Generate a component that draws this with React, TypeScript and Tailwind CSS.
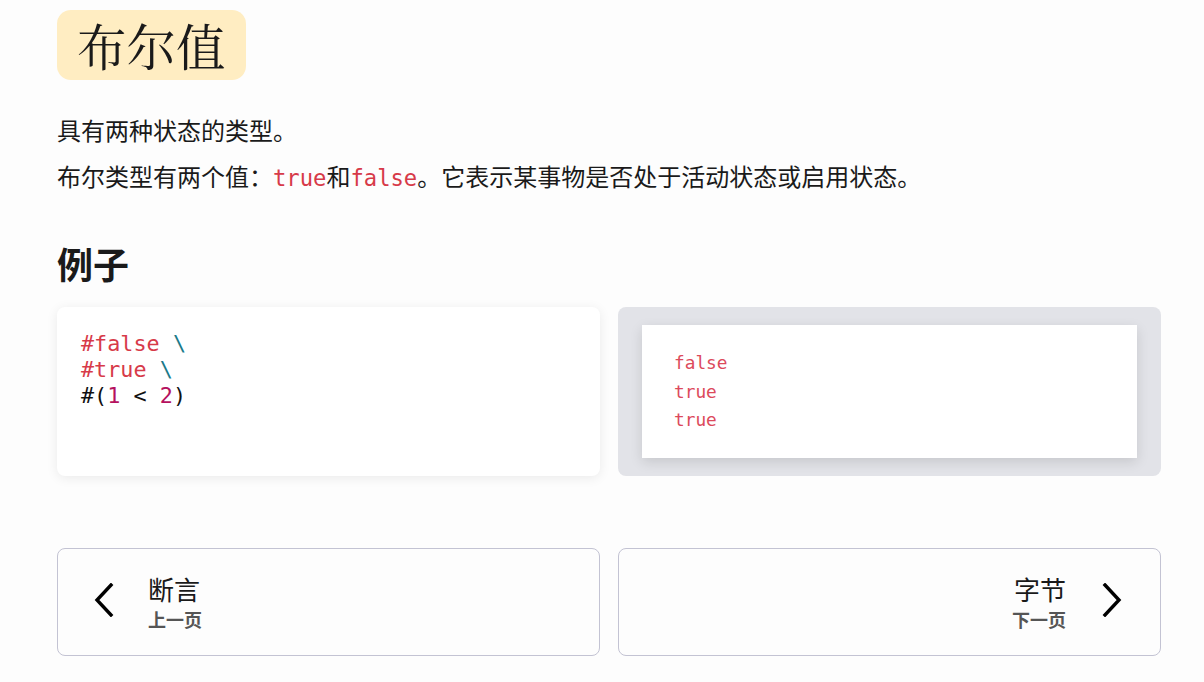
import React from "react";

const mono = { fontFamily: '"DejaVu Sans Mono", "Liberation Mono", monospace' };

export default function App() {
  return (
    <div
      className="min-h-[682px] w-[1204px] bg-[#fdfdfd] text-[#1a1a1a]"
      style={{ fontFamily: '"Noto Sans", "Noto Sans CJK SC", sans-serif' }}
    >
      <div className="ml-[57px] w-[1104px] pt-[10px]">
        <div className="inline-flex h-[70px] items-center rounded-[14px] bg-[#ffedc2] px-[20px]">
          <h1
            className="text-[49.5px] leading-none text-[#1a1a1a]"
            style={{ fontFamily: '"Noto Serif CJK SC", "AR PL UMing CN", serif' }}
          >
            布尔值
          </h1>
        </div>

        <p className="mt-[36px] text-[24px] leading-[30px]">具有两种状态的类型。</p>
        <p className="mt-[16px] text-[24px] leading-[30px]">
          布尔类型有两个值：
          <code className="text-[22.2px] text-[#d73a49]" style={mono}>true</code>和
          <code className="text-[22.2px] text-[#d73a49]" style={mono}>false</code>。它表示某事物是否处于活动状态或启用状态。
        </p>

        <h2 className="mt-[53px] text-[36px] font-bold leading-[40px]">例子</h2>

        <div className="mt-[21px] grid grid-cols-2 gap-[18px]">
          <div className="h-[169px] rounded-[8px] bg-white px-[24px] pt-[24px] shadow-[0_2px_12px_rgba(0,0,0,0.08)]">
            <pre className="text-[21.8px] leading-[26px]" style={mono}>
              <span className="text-[#d73a49]">#false</span> <span className="text-[#1b7a8a]">\</span>
              {"\n"}
              <span className="text-[#d73a49]">#true</span> <span className="text-[#1b7a8a]">\</span>
              {"\n"}
              <span className="text-[#111]">#(</span>
              <span className="text-[#b5115e]">1</span>
              <span className="text-[#111]"> &lt; </span>
              <span className="text-[#b5115e]">2</span>
              <span className="text-[#111]">)</span>
            </pre>
          </div>
          <div className="h-[169px] rounded-[8px] bg-[#e2e3e8] px-[24px] pt-[18px]">
            <div className="h-[133px] bg-white px-[32px] pt-[24px] shadow-[0_4px_12px_rgba(0,0,0,0.12)]">
              <div className="text-[17.8px] leading-[28.5px] text-[#dc4a5c]" style={mono}>
                <div>false</div>
                <div>true</div>
                <div>true</div>
              </div>
            </div>
          </div>
        </div>

        <div className="mt-[72px] grid grid-cols-2 gap-[18px]">
          <div className="flex h-[108px] items-center rounded-[8px] border border-[#c3c3d3] pl-[34px]">
            <svg width="26" height="34" viewBox="0 0 26 34" fill="none" className="-mt-[4px]">
              <path d="M19 2 L5 17 L19 32" stroke="#000" strokeWidth="3.4" strokeLinecap="square" />
            </svg>
            <div className="ml-[30px] mt-[2px] flex flex-col">
              <span className="text-[26px] leading-[33px]">断言</span>
              <span className="text-[18px] font-bold leading-[26px] text-[#555]">上一页</span>
            </div>
          </div>
          <div className="flex h-[108px] items-center justify-end rounded-[8px] border border-[#c3c3d3] pr-[36px]">
            <div className="mr-[32px] mt-[2px] flex flex-col items-end">
              <span className="text-[26px] leading-[33px]">字节</span>
              <span className="text-[18px] font-bold leading-[26px] text-[#555]">下一页</span>
            </div>
            <svg width="26" height="34" viewBox="0 0 26 34" fill="none" className="-mt-[4px]">
              <path d="M7 2 L21 17 L7 32" stroke="#000" strokeWidth="3.4" strokeLinecap="square" />
            </svg>
          </div>
        </div>
      </div>
    </div>
  );
}
